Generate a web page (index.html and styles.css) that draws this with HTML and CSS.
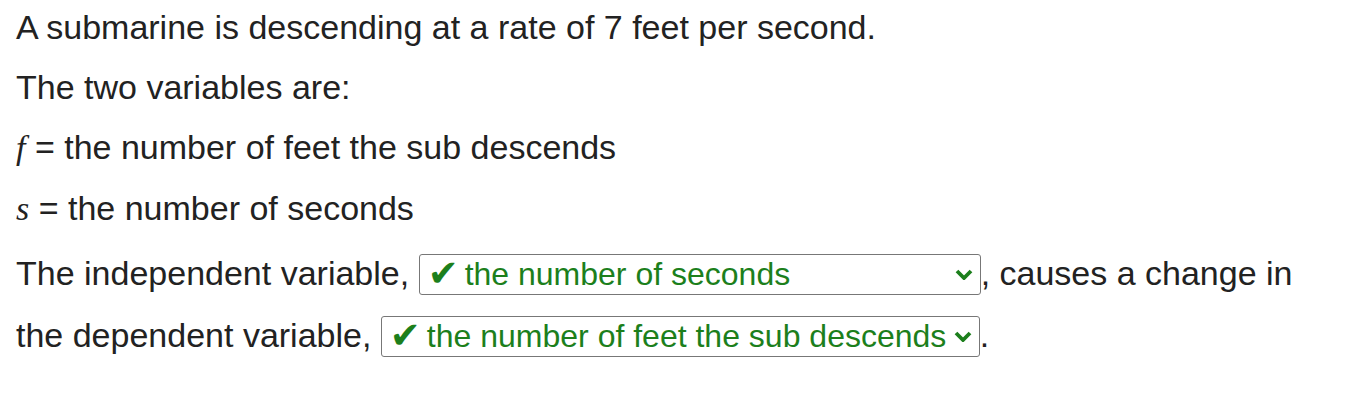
FILE: index.html
```html
<!DOCTYPE html>
<html>
<head>
<meta charset="utf-8">
<link rel="stylesheet" href="styles.css">
</head>
<body>
<div class="page">
  <p class="line">A submarine is descending at a rate of 7 feet per second.</p>
  <p class="line">The two variables are:</p>
  <p class="line"><span class="var">f</span> = the number of feet the sub descends</p>
  <p class="line"><span class="var">s</span> = the number of seconds</p>
  <p class="para">The independent variable, <span class="sel sel-1"><span class="chk">✔</span>the number of seconds<svg class="chev" viewBox="0 0 18 11" width="18" height="11"><path d="M2 2 L9 9 L16 2" fill="none" stroke="#1c7f1c" stroke-width="3.8"/></svg></span>, causes a change in<br>the dependent variable, <span class="sel sel-2"><span class="chk">✔</span>the number of feet the sub descends<svg class="chev" viewBox="0 0 18 11" width="18" height="11"><path d="M2 2 L9 9 L16 2" fill="none" stroke="#1c7f1c" stroke-width="3.8"/></svg></span>.</p>
</div>
</body>
</html>
```
FILE: styles.css
```css
html, body {
  margin: 0;
  padding: 0;
  background: #fff;
}
.page {
  margin-top: -3px;
  padding: 0 16px;
  font-family: "Liberation Sans", Arial, sans-serif;
  font-size: 34px;
  color: #222;
}
.line {
  margin: 0;
  line-height: 60px;
}
.para {
  margin: 0;
  line-height: 62px;
  padding-top: 3px;
}
.var {
  font-family: "Liberation Serif", "Times New Roman", serif;
  font-style: italic;
}
.sel {
  display: inline-flex;
  align-items: center;
  box-sizing: border-box;
  height: 41px;
  border: 1px solid #777;
  border-radius: 3px;
  padding: 0 7px 0 8px;
  font-size: 32px;
  color: #1c7f1c;
  line-height: 38px;
  vertical-align: middle;
  position: relative;
  top: -2px;
}
.sel-1 { width: 562px; }
.sel-2 { width: 599px; }
.chk {
  font-family: "DejaVu Sans", sans-serif;
  font-size: 37px;
  margin-right: 6px;
}
.chev {
  margin-left: auto;
}
```
